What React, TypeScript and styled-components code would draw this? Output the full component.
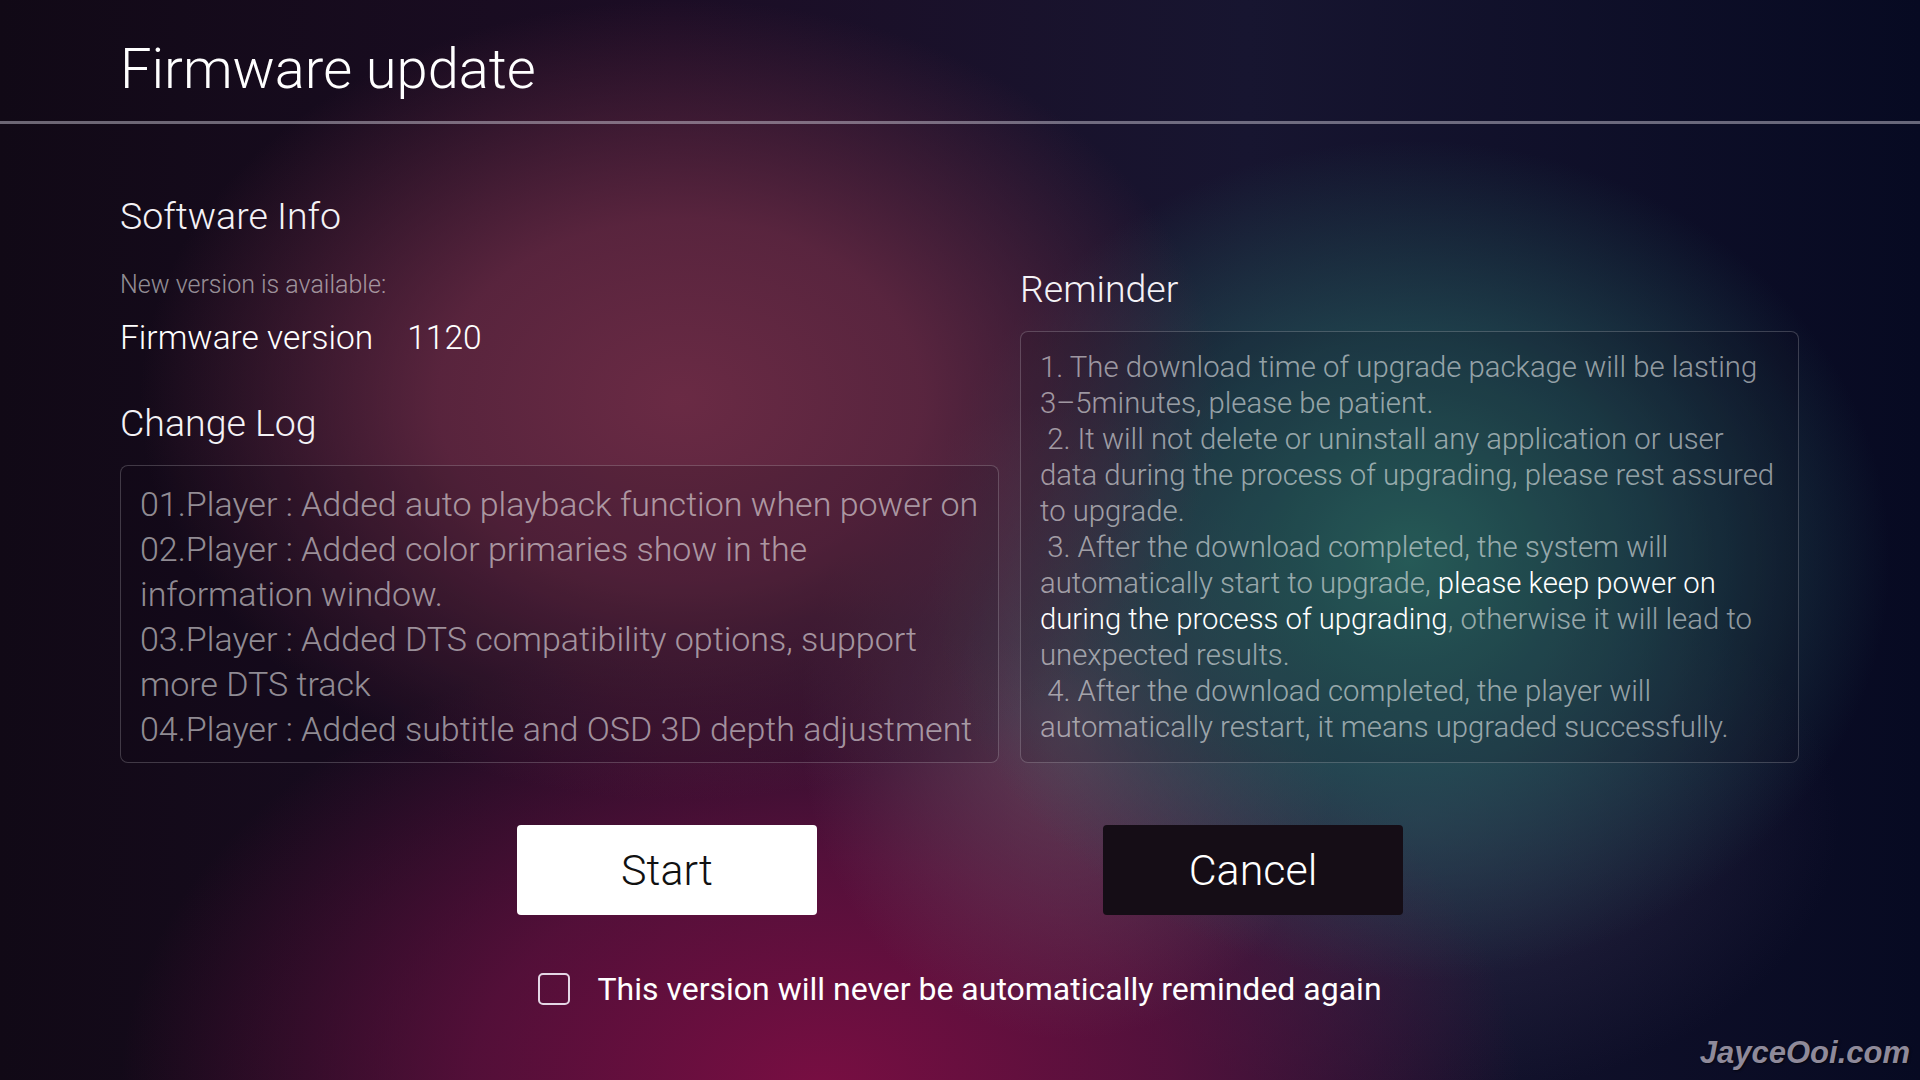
import React from "react";
import styled, { createGlobalStyle } from "styled-components";

const GlobalStyle = createGlobalStyle`
  html, body {
    margin: 0;
    padding: 0;
    background: #0b0816;
  }
  * { box-sizing: border-box; }
`;

const Screen = styled.div`
  position: relative;
  width: 1920px;
  height: 1080px;
  overflow: hidden;
  font-family: Roboto, "Noto Sans", sans-serif;
  color: #fff;
  background:
    radial-gradient(ellipse 540px 400px at 680px 400px, rgba(110, 44, 70, 0.95) 0%, rgba(104, 42, 68, 0.8) 45%, rgba(104, 42, 68, 0) 100%),
    radial-gradient(ellipse 480px 420px at 1410px 560px, rgba(42, 104, 98, 1) 0%, rgba(36, 86, 90, 0.7) 50%, rgba(36, 86, 90, 0) 100%),
    radial-gradient(ellipse 270px 320px at 1070px 720px, rgba(118, 82, 102, 0.7) 0%, rgba(118, 82, 102, 0) 100%),
    radial-gradient(ellipse 700px 470px at 820px 1090px, rgba(120, 14, 66, 1) 0%, rgba(102, 16, 64, 0.75) 50%, rgba(102, 16, 64, 0) 100%),
    radial-gradient(ellipse 420px 280px at 1420px 820px, rgba(62, 58, 88, 0.55) 0%, rgba(62, 58, 88, 0) 100%),
    linear-gradient(90deg, #110916 0%, #1c0d25 35%, #171530 65%, #070a22 100%);
`;

const Header = styled.header`
  height: 124px;
  padding: 41px 120px 0;
  border-bottom: 3px solid rgba(200, 195, 210, 0.5);
`;

const Title = styled.h1`
  margin: 0;
  font-size: 56px;
  line-height: 56px;
  font-weight: 300;
  color: #ffffff;
`;

const Main = styled.main`
  display: grid;
  grid-template-columns: 879px 779px;
  column-gap: 21px;
  align-items: end;
  padding: 70px 120px 0;
`;

const Column = styled.section`
  display: flex;
  flex-direction: column;
`;

const Heading = styled.h2<{ $gap?: number }>`
  margin: ${(p) => p.$gap ?? 0}px 0 0;
  font-size: 37.5px;
  line-height: 44px;
  font-weight: 300;
  color: #f4f2f6;
`;

const Note = styled.div`
  margin-top: 31px;
  font-size: 25px;
  line-height: 32px;
  font-weight: 300;
  color: rgba(255, 255, 255, 0.55);
`;

const VersionRow = styled.div`
  margin-top: 17px;
  display: flex;
  gap: 34px;
  font-size: 33.5px;
  line-height: 40px;
  font-weight: 300;
  color: #ffffff;
`;

const Panel = styled.div<{ $height: number; $padTop: number }>`
  margin-top: 20px;
  height: ${(p) => p.$height}px;
  padding: ${(p) => p.$padTop}px 19px 0;
  border: 1px solid rgba(255, 255, 255, 0.2);
  border-radius: 8px;
  background: rgba(12, 6, 20, 0.14);
`;

const LogLine = styled.div`
  font-size: 34px;
  line-height: 45px;
  font-weight: 300;
  white-space: pre;
  color: rgba(255, 255, 255, 0.55);
`;

const ReminderLine = styled.div`
  font-size: 29.3px;
  line-height: 36px;
  font-weight: 300;
  white-space: pre;
  color: rgba(255, 255, 255, 0.55);
`;

const Strong = styled.span`
  color: #ffffff;
`;

const Actions = styled.div`
  display: flex;
  justify-content: center;
  gap: 286px;
  margin-top: 62px;
`;

const Button = styled.button<{ $primary?: boolean }>`
  width: 300px;
  height: 90px;
  border: none;
  border-radius: 4px;
  font-family: Roboto, "Noto Sans", sans-serif;
  font-size: 43px;
  font-weight: 300;
  background: ${(p) => (p.$primary ? "#ffffff" : "#150d16")};
  color: ${(p) => (p.$primary ? "#111111" : "#ffffff")};
  cursor: pointer;
`;

const CheckRow = styled.label`
  display: flex;
  align-items: center;
  justify-content: center;
  gap: 27px;
  margin-top: 58px;
  cursor: pointer;
`;

const CheckBox = styled.span`
  width: 32px;
  height: 32px;
  border: 2px solid rgba(240, 232, 244, 0.92);
  border-radius: 5px;
`;

const CheckText = styled.span`
  font-size: 32px;
  line-height: 32px;
  font-weight: 400;
  color: #ffffff;
`;

const Watermark = styled.div`
  position: absolute;
  right: 10px;
  bottom: 9px;
  font-family: "Liberation Sans", Arial, sans-serif;
  font-size: 31px;
  font-weight: 700;
  font-style: italic;
  color: #8f8a9a;
  text-shadow: 1px 1px 2px rgba(0, 0, 0, 0.6);
`;

type Seg = { t: string; hi?: boolean };

const changeLog: string[] = [
  "01.Player : Added auto playback function when power on",
  "02.Player : Added color primaries show in the",
  "information window.",
  "03.Player : Added DTS compatibility options, support",
  "more DTS track",
  "04.Player : Added subtitle and OSD 3D depth adjustment",
];

const reminder: Seg[][] = [
  [{ t: "1. The download time of upgrade package will be lasting" }],
  [{ t: "3–5minutes, please be patient." }],
  [{ t: " 2. It will not delete or uninstall any application or user" }],
  [{ t: "data during the process of upgrading, please rest assured" }],
  [{ t: "to upgrade." }],
  [{ t: " 3. After the download completed, the system will" }],
  [{ t: "automatically start to upgrade, " }, { t: "please keep power on", hi: true }],
  [{ t: "during the process of upgrading", hi: true }, { t: ", otherwise it will lead to" }],
  [{ t: "unexpected results." }],
  [{ t: " 4. After the download completed, the player will" }],
  [{ t: "automatically restart, it means upgraded successfully." }],
];

export default function App() {
  return (
    <Screen>
      <GlobalStyle />
      <Header>
        <Title>Firmware update</Title>
      </Header>
      <Main>
        <Column>
          <Heading>Software Info</Heading>
          <Note>New version is available:</Note>
          <VersionRow>
            <span>Firmware version</span>
            <span>1120</span>
          </VersionRow>
          <Heading $gap={43}>Change Log</Heading>
          <Panel $height={298} $padTop={16}>
            {changeLog.map((l, i) => (
              <LogLine key={i}>{l}</LogLine>
            ))}
          </Panel>
        </Column>
        <Column>
          <Heading>Reminder</Heading>
          <Panel $height={432} $padTop={17}>
            {reminder.map((line, i) => (
              <ReminderLine key={i}>
                {line.map((s, j) => (s.hi ? <Strong key={j}>{s.t}</Strong> : <React.Fragment key={j}>{s.t}</React.Fragment>))}
              </ReminderLine>
            ))}
          </Panel>
        </Column>
      </Main>
      <Actions>
        <Button $primary>Start</Button>
        <Button>Cancel</Button>
      </Actions>
      <CheckRow>
        <CheckBox />
        <CheckText>This version will never be automatically reminded again</CheckText>
      </CheckRow>
      <Watermark>JayceOoi.com</Watermark>
    </Screen>
  );
}
